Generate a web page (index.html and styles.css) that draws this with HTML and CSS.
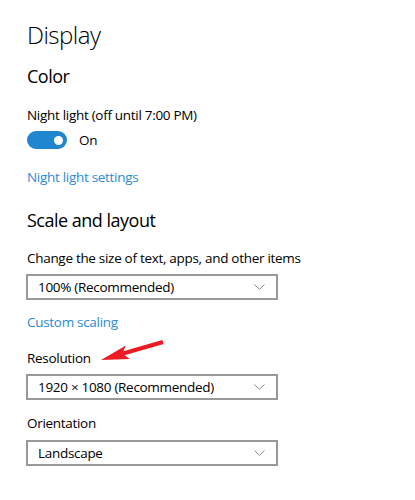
FILE: index.html
```html
<!DOCTYPE html>
<html>
<head>
<meta charset="utf-8">
<link rel="stylesheet" href="styles.css">
</head>
<body>
<main class="page">
  <h1 class="title">Display</h1>
  <h2 class="section sec-color">Color</h2>
  <p class="label nl-label">Night light (off until 7:00 PM)</p>
  <div class="toggle-row">
    <span class="toggle"><span class="knob"></span></span>
    <span class="toggle-text">On</span>
  </div>
  <a class="link nl-link">Night light settings</a>
  <h2 class="section sec-scale">Scale and layout</h2>
  <p class="label size-label">Change the size of text, apps, and other items</p>
  <div class="select sel-scale"><span class="sel-text">100% (Recommended)</span><svg class="chev" width="11" height="6" viewBox="0 0 11 6"><polyline points="0.5,0.5 5.5,5.3 10.5,0.5" fill="none" stroke="#8a8a8a" stroke-width="1"/></svg></div>
  <a class="link cs-link">Custom scaling</a>
  <p class="label res-label">Resolution</p>
  <div class="select sel-res"><span class="sel-text">1920 × 1080 (Recommended)</span><svg class="chev" width="11" height="6" viewBox="0 0 11 6"><polyline points="0.5,0.5 5.5,5.3 10.5,0.5" fill="none" stroke="#8a8a8a" stroke-width="1"/></svg></div>
  <p class="label ori-label">Orientation</p>
  <div class="select sel-ori"><span class="sel-text">Landscape</span><svg class="chev" width="11" height="6" viewBox="0 0 11 6"><polyline points="0.5,0.5 5.5,5.3 10.5,0.5" fill="none" stroke="#8a8a8a" stroke-width="1"/></svg></div>
  <svg class="arrow" width="75" height="35" viewBox="95 335 75 35">
    <polygon fill="#ec1c24" points="101,360 125.9,345.5 123.4,351.3 162.3,339.9 163.7,344.1 124.6,355.3 129.9,358.9"/>
  </svg>
</main>
</body>
</html>
```
FILE: styles.css
```css
html, body {
  margin: 0;
  padding: 0;
  background: #ffffff;
}
.page {
  position: relative;
  width: 415px;
  height: 500px;
  box-sizing: border-box;
  padding: 19px 0 0 27px;
  font-family: "Open Sans", "Noto Sans", sans-serif;
  color: #000000;
  display: flex;
  flex-direction: column;
  align-items: flex-start;
  overflow: hidden;
}
.title {
  margin: 0;
  font-size: 24px;
  font-weight: 300;
  line-height: 32px;
  letter-spacing: -0.5px;
}
.section {
  margin: 0;
  font-size: 18px;
  font-weight: 400;
  line-height: 24px;
  letter-spacing: -0.5px;
}
.label {
  margin: 0;
  font-size: 13.5px;
  line-height: 20px;
  letter-spacing: -0.3px;
}
.link {
  font-size: 13.5px;
  line-height: 20px;
  letter-spacing: -0.3px;
  color: #2b8ad6;
}
.sec-color { margin-top: 13px; }
.nl-label { margin-top: 17px; }
.toggle-row {
  margin-top: 6px;
  display: flex;
  align-items: center;
  height: 18px;
}
.toggle {
  width: 40px;
  height: 18px;
  border-radius: 9px;
  background: #1f86cf;
  position: relative;
}
.knob {
  position: absolute;
  right: 4px;
  top: 4.5px;
  width: 9px;
  height: 9px;
  border-radius: 50%;
  background: #ffffff;
}
.toggle-text {
  margin-left: 12px;
  font-size: 13.5px;
  line-height: 20px;
  letter-spacing: -0.3px;
}
.nl-link { margin-top: 17.6px; }
.sec-scale { margin-top: 21.4px; }
.size-label { margin-top: 15.6px; }
.select {
  box-sizing: border-box;
  width: 252px;
  height: 26px;
  border: 2px solid #999999;
  margin-left: -1px;
  padding: 0 11px 0 10px;
  display: flex;
  align-items: center;
  justify-content: space-between;
  font-size: 13.5px;
  letter-spacing: -0.3px;
}
.sel-scale { margin-top: 6.4px; }
.cs-link { margin-top: 11.6px; }
.res-label { margin-top: 16px; }
.sel-res { margin-top: 6.4px; }
.ori-label { margin-top: 12.6px; }
.sel-ori { margin-top: 7.4px; }
.arrow {
  position: absolute;
  left: 95px;
  top: 335px;
}
```
